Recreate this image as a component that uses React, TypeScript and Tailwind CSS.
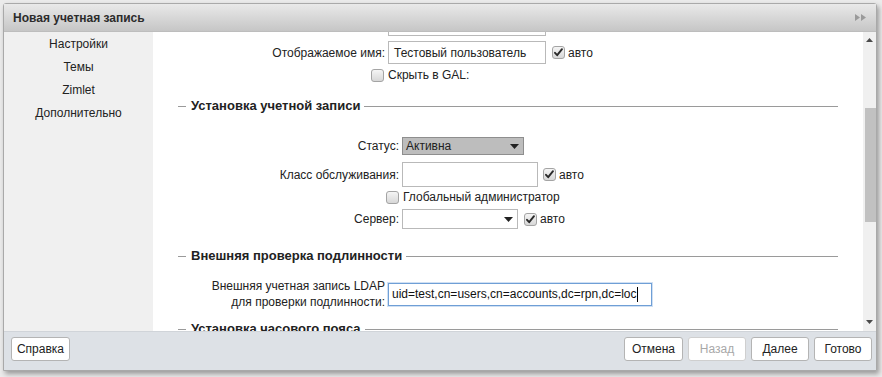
import React from "react";

function Box({ checked }: { checked?: boolean }) {
  return (
    <svg width="13" height="13" viewBox="0 0 13 13" className="shrink-0">
      <defs>
        <linearGradient id={checked ? "cbg1" : "cbg0"} x1="0" y1="0" x2="0" y2="1">
          <stop offset="0" stopColor="#f6f6f6" />
          <stop offset="1" stopColor="#d6d6d6" />
        </linearGradient>
      </defs>
      <rect x="0.5" y="0.5" width="12" height="12" rx="2.5" fill={`url(#${checked ? "cbg1" : "cbg0"})`} stroke="#a4a4a4" />
      {checked && (
        <path d="M3 6.8 L5.2 9.2 L10 3.2" fill="none" stroke="#2a2a2a" strokeWidth="1.9" strokeLinecap="round" strokeLinejoin="round" />
      )}
    </svg>
  );
}

function Arrow() {
  return (
    <svg width="9" height="5" viewBox="0 0 9 5" className="shrink-0">
      <path d="M0 0 L9 0 L4.5 5 Z" fill="#222" />
    </svg>
  );
}

function Section({ title, className }: { title: string; className?: string }) {
  return (
    <div className={`flex items-center h-[16px] mx-[25px] ${className ?? ""}`}>
      <div className="w-[8px] h-px bg-[#9a9a9a]" />
      <div className="ml-[5px] font-bold text-[13px] text-[#222] whitespace-nowrap">{title}</div>
      <div className="ml-[4px] flex-1 h-px bg-[#9a9a9a]" />
    </div>
  );
}

function Btn({ children, disabled, w }: { children: React.ReactNode; disabled?: boolean; w: string }) {
  return (
    <div
      className={`${w} h-[24px] flex items-center justify-center bg-white border rounded-[3px] text-[12px] ${
        disabled ? "text-[#a8a8a8] border-[#cfcfcf]" : "text-[#222] border-[#b4b4b4]"
      }`}
    >
      {children}
    </div>
  );
}

export default function App() {
  return (
    <div className="w-[882px] h-[377px] overflow-hidden bg-[#ebebeb] pl-[3px] pt-[3px] font-['Liberation_Sans',Arial,sans-serif] text-[12px] text-[#222]">
      <div className="w-[874px] h-[368px] flex flex-col border border-[#a9a9a9] rounded-t-[3px] bg-white shadow-[2px_3px_5px_rgba(0,0,0,0.35)]">
        {/* Title bar */}
        <div className="h-[28px] shrink-0 flex items-center justify-between pl-[9px] pr-[10px] bg-gradient-to-b from-[#e9e9e9] to-[#c6c6c6] border-b border-[#bdbdbd]">
          <div className="font-bold text-[12px] text-[#2c2c2c]">Новая учетная запись</div>
          <svg width="11" height="7" viewBox="0 0 11 7">
            <path d="M0 0 L5 3.5 L0 7 Z M6 0 L11 3.5 L6 7 Z" fill="#9a9a9a" />
          </svg>
        </div>

        {/* Body */}
        <div className="h-[299px] shrink-0 flex">
          {/* Nav */}
          <div className="w-[149px] shrink-0 bg-[#f0f0f0] flex flex-col items-center pt-[1px] leading-[23px] text-[12px] text-[#222]">
            <div>Настройки</div>
            <div>Темы</div>
            <div>Zimlet</div>
            <div>Дополнительно</div>
          </div>

          {/* Content */}
          <div className="flex-1 overflow-hidden bg-white">
            <div className="flex flex-col">
              {/* partially visible top input */}
              <div className="flex -mt-[19px] h-[23px]">
                <div className="w-[232px] shrink-0" />
                <div className="ml-[3px] w-[158px] h-[23px] border border-[#b9b9b9]" />
              </div>

              {/* Отображаемое имя */}
              <div className="flex items-center mt-[5px] h-[23px]">
                <div className="w-[232px] shrink-0 text-right">Отображаемое имя:</div>
                <div className="ml-[3px] w-[158px] h-[23px] border border-[#b9b9b9] flex items-center pl-[5px]">
                  Тестовый пользователь
                </div>
                <div className="ml-[6px] flex items-center gap-[3px]">
                  <Box checked />
                  <span>авто</span>
                </div>
              </div>

              {/* Скрыть в GAL */}
              <div className="flex items-center mt-[3px] h-[16px]">
                <div className="w-[231px] shrink-0 flex justify-end">
                  <Box />
                </div>
                <div className="ml-[4px]">Скрыть в GAL:</div>
              </div>

              <Section title="Установка учетной записи" className="mt-[15px]" />

              {/* Статус */}
              <div className="flex items-center mt-[23px] h-[18px]">
                <div className="w-[246px] shrink-0 text-right">Статус:</div>
                <div className="ml-[3px] w-[122px] h-[18px] bg-[#bdbdbd] border border-[#8e8e8e] flex items-center justify-between pl-[3px] pr-[4px]">
                  <span>Активна</span>
                  <Arrow />
                </div>
              </div>

              {/* Класс обслуживания */}
              <div className="flex items-center mt-[7px] h-[25px]">
                <div className="w-[246px] shrink-0 text-right">Класс обслуживания:</div>
                <div className="ml-[3px] w-[136px] h-[25px] border border-[#b9b9b9]" />
                <div className="ml-[5px] flex items-center gap-[3px]">
                  <Box checked />
                  <span>авто</span>
                </div>
              </div>

              {/* Глобальный администратор */}
              <div className="flex items-center mt-[2px] h-[16px]">
                <div className="w-[246px] shrink-0 flex justify-end">
                  <Box />
                </div>
                <div className="ml-[4px]">Глобальный администратор</div>
              </div>

              {/* Сервер */}
              <div className="flex items-center mt-[4px] h-[20px]">
                <div className="w-[246px] shrink-0 text-right">Сервер:</div>
                <div className="ml-[3px] w-[116px] h-[20px] bg-white border border-[#b9b9b9] flex items-center justify-end pr-[4px]">
                  <Arrow />
                </div>
                <div className="ml-[6px] flex items-center gap-[3px]">
                  <Box checked />
                  <span>авто</span>
                </div>
              </div>

              <Section title="Внешняя проверка подлинности" className="mt-[19px]" />

              {/* LDAP */}
              <div className="flex items-center mt-[14px] h-[32px]">
                <div className="w-[232px] shrink-0 text-right leading-[16px]">
                  Внешняя учетная запись LDAP
                  <br />
                  для проверки подлинности:
                </div>
                <div className="ml-[3px] w-[264px] h-[23px] border border-[#6f9fd6] shadow-[0_0_0_1px_rgba(120,165,220,0.35)] flex items-center pl-[3px] text-[12px] text-[#111]">
                  uid=test,cn=users,cn=accounts,dc=rpn,dc=loc
                  <span className="w-px h-[15px] bg-black ml-[1px]" />
                </div>
              </div>

              <Section title="Установка часового пояса" className="mt-[11px]" />
            </div>
          </div>

          {/* Scrollbar */}
          <div className="w-[13px] shrink-0 bg-[#f0f0f0] flex flex-col items-end">
            <div className="w-[13px] h-[16px] flex items-center justify-center">
              <svg width="7" height="4" viewBox="0 0 7 4">
                <path d="M0 4 L3.5 0 L7 4 Z" fill="#4a4a4a" />
              </svg>
            </div>
            <div className="mt-[60px] w-[11px] h-[114px] bg-[#c1c1c1]" />
            <div className="flex-1" />
            <div className="w-[13px] h-[16px] flex items-center justify-center mb-[1px]">
              <svg width="7" height="4" viewBox="0 0 7 4">
                <path d="M0 0 L7 0 L3.5 4 Z" fill="#4a4a4a" />
              </svg>
            </div>
          </div>
        </div>

        {/* Footer */}
        <div className="flex-1 bg-[#dde1e6] flex items-start justify-between pt-[5px] pl-[7px] pr-[4px] border-t border-[#d0d4d9]">
          <Btn w="w-[59px]">Справка</Btn>
          <div className="flex gap-[5px]">
            <Btn w="w-[59px]">Отмена</Btn>
            <Btn w="w-[58px]" disabled>
              Назад
            </Btn>
            <Btn w="w-[58px]">Далее</Btn>
            <Btn w="w-[58px]">Готово</Btn>
          </div>
        </div>
      </div>
    </div>
  );
}
